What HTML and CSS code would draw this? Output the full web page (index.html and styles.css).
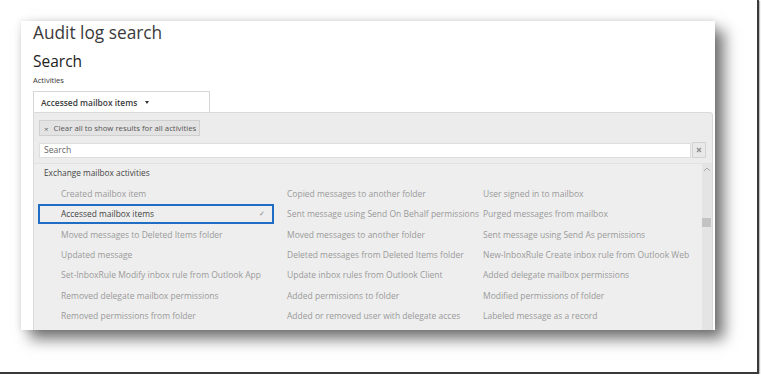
FILE: index.html
```html
<!DOCTYPE html>
<html lang="en">
<head>
    <meta charset="UTF-8">
    <title>Audit log search</title>
    <link rel="stylesheet" href="styles.css">
</head>
<body>
    <div class="frame">
        <div class="card">
            <h1>Audit log search</h1>
            <h2>Search</h2>
            <div class="field-label">Activities</div>
            <div class="select">Accessed mailbox items <span class="caret"></span></div>

            <div class="panel">
                <div class="chip"><span class="chip-x">×</span>Clear all to show results for all activities</div>

                <div class="search-row">
                    <input type="text" class="search-input" placeholder="Search">
                    <button class="search-clear">
                        <svg width="6" height="6" viewBox="0 0 6 6"><path d="M1 1L5 5M5 1L1 5" stroke="#8a8a8a" stroke-width="1.2"/></svg>
                    </button>
                </div>

                <div class="list">
                    <div class="list-body">
                        <div class="group-title">Exchange mailbox activities</div>
                        <div class="items">
                            <div class="item">Created mailbox item</div>
                            <div class="item">Copied messages to another folder</div>
                            <div class="item">User signed in to mailbox</div>

                            <div class="item selected">Accessed mailbox items <span class="check">✓</span></div>
                            <div class="item">Sent message using Send On Behalf permissions</div>
                            <div class="item">Purged messages from mailbox</div>

                            <div class="item">Moved messages to Deleted Items folder</div>
                            <div class="item">Moved messages to another folder</div>
                            <div class="item">Sent message using Send As permissions</div>

                            <div class="item">Updated message</div>
                            <div class="item">Deleted messages from Deleted Items folder</div>
                            <div class="item">New-InboxRule Create inbox rule from Outlook Web</div>

                            <div class="item">Set-InboxRule Modify inbox rule from Outlook App</div>
                            <div class="item">Update inbox rules from Outlook Client</div>
                            <div class="item">Added delegate mailbox permissions</div>

                            <div class="item">Removed delegate mailbox permissions</div>
                            <div class="item">Added permissions to folder</div>
                            <div class="item">Modified permissions of folder</div>

                            <div class="item">Removed permissions from folder</div>
                            <div class="item">Added or removed user with delegate acces</div>
                            <div class="item">Labeled message as a record</div>
                        </div>
                    </div>
                    <div class="scrollbar">
                        <svg class="scroll-up" width="8" height="5" viewBox="0 0 8 5"><path d="M1 4L4 1L7 4" fill="none" stroke="#a8a8a8" stroke-width="1"/></svg>
                        <div class="scroll-thumb"></div>
                    </div>
                </div>
            </div>
        </div>
    </div>
</body>
</html>
```

FILE: styles.css
```css
* {
    margin: 0;
    padding: 0;
    box-sizing: border-box;
    font-family: "Segoe UI", "Open Sans", sans-serif;
}

body {
    background: #ffffff;
}

.frame {
    width: 759px;
    height: 374px;
    padding: 21px;
    border-right: 2px solid #3a3a3a;
    border-bottom: 2px solid #3a3a3a;
    box-shadow: 1px 1px 1px rgba(0, 0, 0, 0.25);
}

.card {
    width: 694px;
    height: 309px;
    padding-left: 12px;
    background: #ffffff;
    overflow: hidden;
    box-shadow: 0 0 7px rgba(0, 0, 0, 0.12), 9px 9px 14px rgba(0, 0, 0, 0.55);
}

h1 {
    font-size: 17.3px;
    font-weight: 400;
    line-height: 24px;
    color: #3a3a3a;
}

h2 {
    margin-top: 6px;
    font-size: 15.5px;
    font-weight: 400;
    line-height: 20px;
    color: #222;
}

.field-label {
    margin-top: 3px;
    font-size: 7.5px;
    line-height: 12px;
    color: #333;
}

.select {
    display: flex;
    align-items: center;
    width: 177px;
    height: 21px;
    margin-top: 5px;
    padding-left: 7px;
    border: 1px solid #d6d6d6;
    border-bottom: none;
    font-size: 8.4px;
    font-weight: 600;
    color: #3c3c3c;
}

.caret {
    margin-left: 8px;
    width: 0;
    height: 0;
    border-left: 2.5px solid transparent;
    border-right: 2.5px solid transparent;
    border-top: 3px solid #333;
}

.panel {
    width: 680px;
    height: 230px;
    padding: 7px 0 0 5px;
    background: #ececec;
    border: 1px solid #d9d9d9;
    border-radius: 0 3px 0 0;
}

.chip {
    display: flex;
    align-items: center;
    height: 16px;
    width: 161px;
    padding-left: 4px;
    background: #e3e3e3;
    border: 1px solid #cfcfcf;
    font-size: 7.8px;
    color: #555;
    white-space: nowrap;
}

.chip-x {
    margin-right: 5px;
    font-size: 8px;
    color: #666;
}

.search-row {
    display: flex;
    align-items: center;
    margin-top: 6px;
    padding-right: 6px;
}

.search-input {
    flex: 1;
    height: 15px;
    padding-left: 4px;
    border: 1px solid #dedede;
    background: #ffffff;
    font-size: 8.6px;
    color: #333;
    outline: none;
}

.search-input::placeholder {
    color: #666;
}

.search-clear {
    display: flex;
    align-items: center;
    justify-content: center;
    width: 14px;
    height: 16px;
    margin-left: 1px;
    background: #e9e9e9;
    border: 1px solid #d3d3d3;
}

.list {
    display: flex;
    margin: 5px 0 0 -5px;
    border-top: 1px solid #e2e2e2;
    height: 170px;
}

.list-body {
    flex: 1;
    padding-left: 4px;
    background: #eeeeee;
}

.group-title {
    padding: 3px 0 0 6px;
    height: 19.4px;
    font-size: 8.3px;
    color: #444;
}

.items {
    display: grid;
    grid-template-columns: 238px 196px 1fr;
    grid-auto-rows: 20.3px;
}

.item {
    display: flex;
    align-items: center;
    padding-left: 11px;
    font-size: 8.5px;
    color: #9a9a9a;
    white-space: nowrap;
}

.item:nth-child(3n+1) {
    padding-left: 23px;
}

.item.selected {
    padding-left: 21px;
    border: 2px solid #1f6ec4;
    margin-right: 2px;
    color: #444;
    font-size: 8.4px;
}

.check {
    margin-left: auto;
    margin-right: 7px;
    font-size: 7px;
    color: #888;
}

.scrollbar {
    position: relative;
    width: 10px;
    background: #e4e4e4;
}

.scroll-up {
    display: block;
    margin: 3px auto 0;
}

.scroll-thumb {
    width: 9px;
    height: 9px;
    margin-top: 46px;
    background: #c3c3c3;
}
```
